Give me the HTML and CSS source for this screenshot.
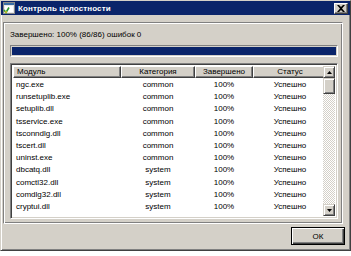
FILE: index.html
```html
<!DOCTYPE html>
<html>
<head>
<meta charset="utf-8">
<link rel="stylesheet" href="styles.css">
</head>
<body>
<div class="window">
  <div class="titlebar">
    <svg class="ticon" width="12" height="12" viewBox="0 0 12 12">
      <rect x="0.5" y="0.5" width="11" height="11" fill="#e8e8e8" stroke="#8a8a8a"/>
      <rect x="1" y="1" width="10" height="2" fill="#3a6ea5"/>
      <rect x="2" y="4" width="8" height="6" fill="#fff"/>
      <path d="M1 8 L3 10.5 L6 5.5" fill="none" stroke="#2e9a2e" stroke-width="1.6"/>
      <circle cx="3" cy="10" r="1" fill="#e0c020"/>
    </svg>
    <span class="ttext">Контроль целостности</span>
    <div class="close">
      <svg width="8" height="7" viewBox="0 0 8 7"><path d="M0 0h2l2 2 2-2h2l-3 3.5 3 3.5h-2l-2-2-2 2h-2l3-3.5z" fill="#000"/></svg>
    </div>
  </div>
  <div class="panel">
    <div class="status">Завершено: 100% (86/86) ошибок 0</div>
    <div class="progress"><div class="fill"></div></div>
    <div class="list">
      <div class="head">
        <div class="hc c1 left">Модуль</div>
        <div class="hc c2">Категория</div>
        <div class="hc c3">Завершено</div>
        <div class="hc c4">Статус</div>
      </div>
      <div class="rows">
        <div class="row"><span class="c1 left">ngc.exe</span><span class="c2">common</span><span class="c3">100%</span><span class="c4">Успешно</span></div>
        <div class="row"><span class="c1 left">runsetuplib.exe</span><span class="c2">common</span><span class="c3">100%</span><span class="c4">Успешно</span></div>
        <div class="row"><span class="c1 left">setuplib.dll</span><span class="c2">common</span><span class="c3">100%</span><span class="c4">Успешно</span></div>
        <div class="row"><span class="c1 left">tsservice.exe</span><span class="c2">common</span><span class="c3">100%</span><span class="c4">Успешно</span></div>
        <div class="row"><span class="c1 left">tsconndlg.dll</span><span class="c2">common</span><span class="c3">100%</span><span class="c4">Успешно</span></div>
        <div class="row"><span class="c1 left">tscert.dll</span><span class="c2">common</span><span class="c3">100%</span><span class="c4">Успешно</span></div>
        <div class="row"><span class="c1 left">uninst.exe</span><span class="c2">common</span><span class="c3">100%</span><span class="c4">Успешно</span></div>
        <div class="row"><span class="c1 left">dbcatq.dll</span><span class="c2">system</span><span class="c3">100%</span><span class="c4">Успешно</span></div>
        <div class="row"><span class="c1 left">comctl32.dll</span><span class="c2">system</span><span class="c3">100%</span><span class="c4">Успешно</span></div>
        <div class="row"><span class="c1 left">comdlg32.dll</span><span class="c2">system</span><span class="c3">100%</span><span class="c4">Успешно</span></div>
        <div class="row"><span class="c1 left">cryptui.dll</span><span class="c2">system</span><span class="c3">100%</span><span class="c4">Успешно</span></div>
      </div>
      <div class="sbar">
        <div class="sbtn"><svg width="5" height="3" viewBox="0 0 5 3"><path d="M2.5 0L5 3H0z" fill="#000"/></svg></div>
        <div class="thumb"></div>
        <div class="track"></div>
        <div class="sbtn"><svg width="5" height="3" viewBox="0 0 5 3"><path d="M0 0h5L2.5 3z" fill="#000"/></svg></div>
      </div>
    </div>
  </div>
  <div class="footer">
    <div class="okbtn">ОК</div>
  </div>
</div>
</body>
</html>
```
FILE: styles.css
```css
html, body { margin: 0; padding: 0; background: #fff; }
body { width: 351px; height: 256px; overflow: hidden; font-family: "Liberation Sans", Arial, sans-serif; font-size: 8px; color: #000; }
.window {
  width: 351px; height: 251px; box-sizing: border-box;
  background: #d4d0c8;
  border: 1px solid; border-color: #d4d0c8 #404040 #404040 #d4d0c8;
  box-shadow: inset 1px 1px #fff, inset -1px -1px #808080;
  display: flex; flex-direction: column;
}
.titlebar {
  height: 14px; background: #0a246a; display: flex; align-items: center;
  padding: 0 1px 0 2px; flex: none;
}
.ticon { flex: none; }
.ttext { color: #fff; font-weight: bold; font-size: 8px; margin-left: 3px; flex: 1; white-space: nowrap; letter-spacing: 0.1px; }
.close {
  width: 14px; height: 11px; box-sizing: border-box; background: #d4d0c8;
  border: 1px solid; border-color: #fff #404040 #404040 #fff;
  box-shadow: inset -1px -1px #808080;
  display: flex; align-items: center; justify-content: center; margin-right: 1px;
}
.panel {
  margin: 7px 0 0 2px; width: 340px; height: 202px; box-sizing: border-box;
  border: 1px solid; border-color: #808080 #fff #fff #808080;
  box-shadow: inset 1px 1px #fff, inset -1px -1px #808080;
  padding: 6px 4px 0 6px; display: flex; flex-direction: column;
}
.status { height: 11px; line-height: 11px; white-space: nowrap; }
.progress {
  margin-top: 5px; height: 12px; box-sizing: border-box;
  border: 1px solid; border-color: #808080 #fff #fff #808080;
  padding: 1px; width: 328px;
}
.fill { height: 100%; background: #0a246a; }
.list {
  margin-top: 6px; width: 328px; height: 156px; box-sizing: border-box;
  border: 1px solid; border-color: #808080 #fff #fff #808080;
  box-shadow: inset 1px 1px #404040, inset -1px -1px #d4d0c8;
  padding: 2px 2px 2px 2px; position: relative; background: #fff; overflow: hidden;
}
.head { display: flex; height: 12px; }
.hc {
  box-sizing: border-box; background: #d4d0c8; height: 12px; line-height: 10px;
  border: 1px solid; border-color: #fff #404040 #404040 #fff;
  box-shadow: inset -1px -1px #808080; text-align: center; white-space: nowrap;
}
.left { text-align: left; padding-left: 3px; }
.c1 { width: 108px; }
.c2 { width: 74px; }
.c3 { width: 58px; }
.c4 { width: 74px; }
.rows { padding-top: 1px; }
.row { display: flex; height: 12.2px; line-height: 12px; white-space: nowrap; }
.row span { display: block; text-align: center; box-sizing: border-box; }
.row span.left { text-align: left; padding-left: 3px; }
.sbar {
  position: absolute; right: 2px; top: 2px; bottom: 2px; width: 12px;
  display: flex; flex-direction: column;
}
.sbtn, .thumb {
  box-sizing: border-box; background: #d4d0c8; width: 12px;
  border: 1px solid; border-color: #d4d0c8 #404040 #404040 #d4d0c8;
  box-shadow: inset 1px 1px #fff, inset -1px -1px #808080;
  flex: none;
}
.sbtn { height: 12px; display: flex; align-items: center; justify-content: center; }
.thumb { height: 16px; }
.track {
  flex: 1;
  background-color: #fff;
  background-image: linear-gradient(45deg, #d4d0c8 25%, transparent 25%, transparent 75%, #d4d0c8 75%), linear-gradient(45deg, #d4d0c8 25%, transparent 25%, transparent 75%, #d4d0c8 75%);
  background-size: 2px 2px; background-position: 0 0, 1px 1px;
}
.footer { flex: 1; display: flex; justify-content: flex-end; align-items: flex-start; padding: 3px 5px 0 0; }
.okbtn {
  width: 54px; height: 18px; box-sizing: border-box; background: #d4d0c8;
  border: 1px solid #000;
  box-shadow: inset 1px 1px #fff, inset -1px -1px #404040, inset -2px -2px #808080;
  display: flex; align-items: center; justify-content: center; font-size: 8px;
}
```
